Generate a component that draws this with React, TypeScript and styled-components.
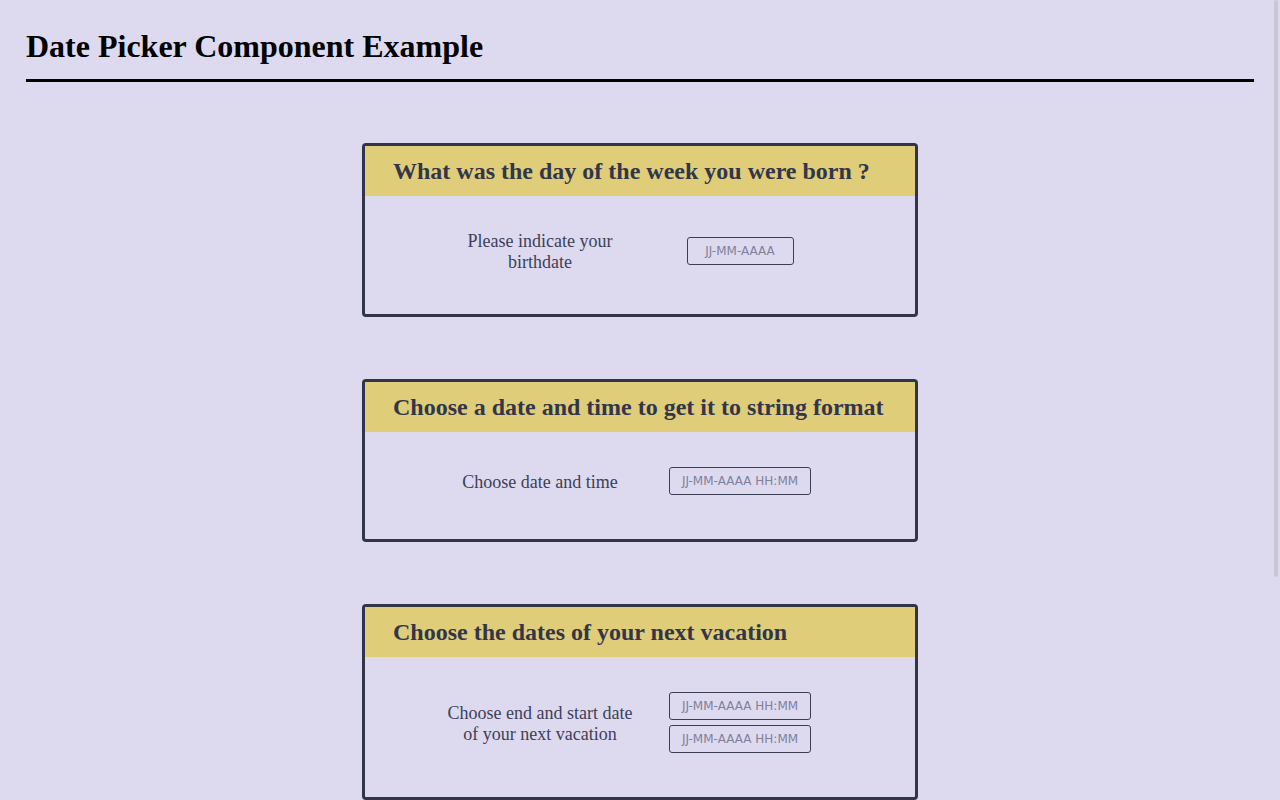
import React from "react";
import styled, { createGlobalStyle } from "styled-components";

const GlobalStyle = createGlobalStyle`
  html {
    overflow: hidden;
  }
  body {
    margin: 0;
    background: #dddaf0;
    font-family: "Liberation Serif", "Times New Roman", serif;
  }
`;

type Picker = {
  title: string;
  label: string;
  placeholder: string;
  width: number;
  count: number;
};

const pickers: Picker[] = [
  {
    title: "What was the day of the week you were born ?",
    label: "Please indicate your birthdate",
    placeholder: "JJ-MM-AAAA",
    width: 107,
    count: 1,
  },
  {
    title: "Choose a date and time to get it to string format",
    label: "Choose date and time",
    placeholder: "JJ-MM-AAAA HH:MM",
    width: 142,
    count: 1,
  },
  {
    title: "Choose the dates of your next vacation",
    label: "Choose end and start date of your next vacation",
    placeholder: "JJ-MM-AAAA HH:MM",
    width: 142,
    count: 2,
  },
];

export default function App() {
  return (
    <>
      <GlobalStyle />
      <Page>
        <Header>
          <Title>Date Picker Component Example</Title>
        </Header>
        <Cards>
          {pickers.map((p) => (
            <Card key={p.title}>
              <CardHead>{p.title}</CardHead>
              <CardBody>
                <Row>
                  <Label>{p.label}</Label>
                  <Inputs>
                    {Array.from({ length: p.count }).map((_, i) => (
                      <DateInput
                        key={i}
                        $w={p.width}
                        type="text"
                        placeholder={p.placeholder}
                      />
                    ))}
                  </Inputs>
                </Row>
              </CardBody>
            </Card>
          ))}
        </Cards>
      </Page>
      <ScrollThumb />
    </>
  );
}

const Page = styled.div`
  padding: 28px 26px 60px;
`;

const Header = styled.header`
  border-bottom: 3px solid #000;
  padding-bottom: 14px;
`;

const Title = styled.h1`
  margin: 0;
  font-size: 32px;
  font-weight: bold;
  color: #000;
`;

const Cards = styled.main`
  display: flex;
  flex-direction: column;
  align-items: center;
  gap: 62px;
  padding-top: 61px;
`;

const Card = styled.section`
  width: 556px;
  box-sizing: border-box;
  border: 3px solid #32354a;
  border-radius: 4px;
  overflow: hidden;
`;

const CardHead = styled.h2`
  margin: 0;
  height: 50px;
  display: flex;
  align-items: center;
  padding-left: 28px;
  background: #e0cd7a;
  color: #33364a;
  font-size: 24px;
  font-weight: bold;
`;

const CardBody = styled.div`
  padding: 35px 0 41px;
`;

const Row = styled.div`
  display: grid;
  grid-template-columns: 200px 200px;
  justify-content: center;
  align-items: center;
`;

const Label = styled.div`
  text-align: center;
  font-size: 18px;
  line-height: 21px;
  color: #3d4057;
`;

const Inputs = styled.div`
  display: flex;
  flex-direction: column;
  align-items: center;
  gap: 5px;
  padding-bottom: 3px;
`;

const DateInput = styled.input<{ $w: number }>`
  width: ${(p) => p.$w}px;
  height: 28px;
  box-sizing: border-box;
  border: 1px solid #3b3e52;
  border-radius: 3px;
  background: transparent;
  text-align: center;
  font-family: "DejaVu Sans", Verdana, sans-serif;
  font-size: 12px;
  color: #3d4057;
  outline: none;

  &::placeholder {
    color: #80809a;
  }
`;

const ScrollThumb = styled.div`
  position: fixed;
  top: 0;
  right: 2px;
  width: 4px;
  height: 577px;
  border-radius: 2px;
  background: #c9c8d2;
`;
